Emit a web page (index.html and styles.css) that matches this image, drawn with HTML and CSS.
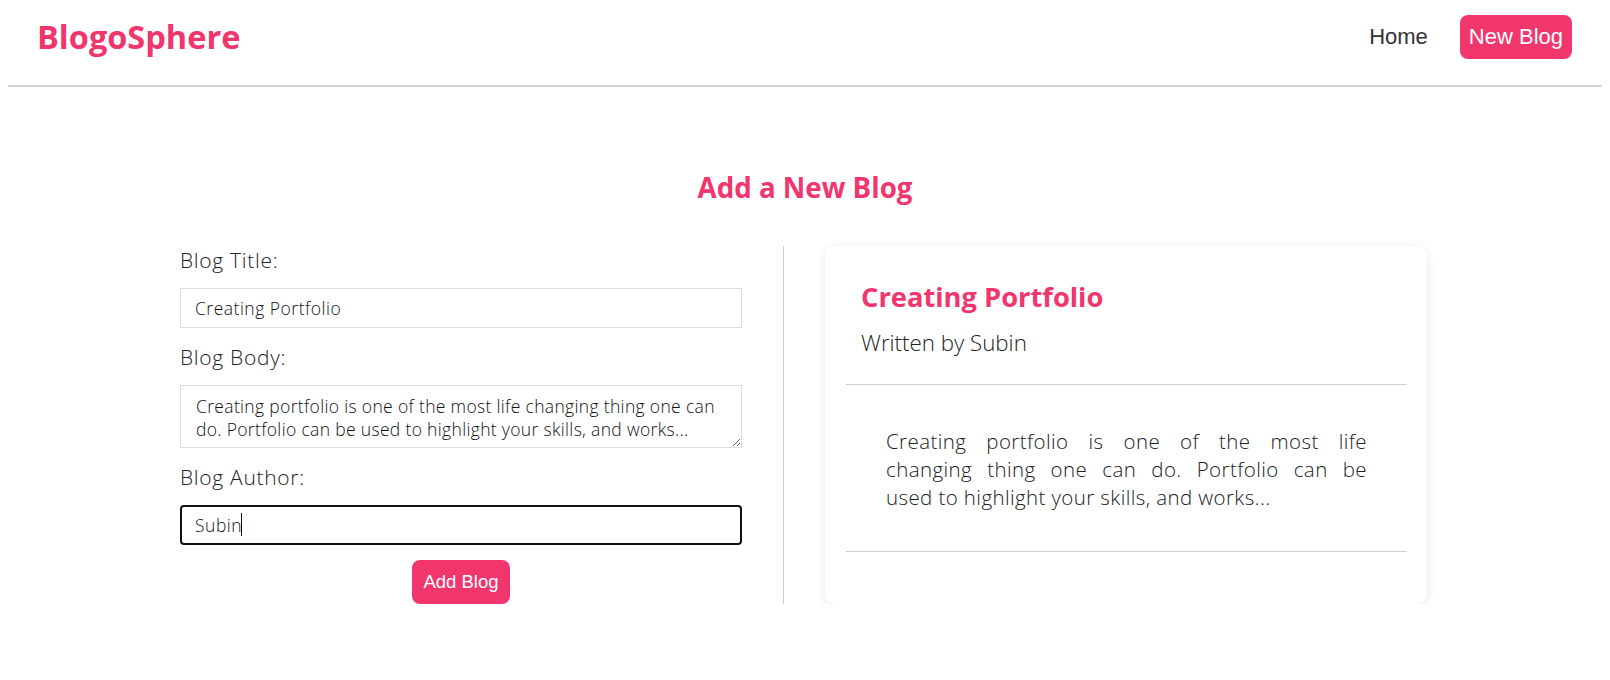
FILE: index.html
```html
<!DOCTYPE html>
<html lang="en">
<head>
<meta charset="utf-8">
<title>BlogoSphere</title>
<link rel="stylesheet" href="styles.css">
</head>
<body>
  <nav class="navbar">
    <h1 class="logo">BlogoSphere</h1>
    <div class="links">
      <a class="link" href="#">Home</a>
      <a class="link link-primary" href="#">New Blog</a>
    </div>
  </nav>
  <main class="create">
    <h2 class="page-title">Add a New Blog</h2>
    <div class="editor">
      <form class="form">
        <label class="label">Blog Title:</label>
        <input class="field" type="text" value="Creating Portfolio">
        <label class="label">Blog Body:</label>
        <textarea class="field field-area">Creating portfolio is one of the most life changing thing one can do. Portfolio can be used to highlight your skills, and works...</textarea>
        <label class="label">Blog Author:</label>
        <div class="field-wrap">
          <input class="field field-focus" type="text" value="Subin">
          <span class="caret"></span>
        </div>
        <button class="submit" type="button">Add Blog</button>
      </form>
      <div class="preview">
        <article class="card">
          <h2 class="card-title">Creating Portfolio</h2>
          <p class="card-author">Written by Subin</p>
          <hr class="rule">
          <p class="card-body"><span class="line">Creating portfolio is one of the most life</span> <span class="line">changing thing one can do. Portfolio can be</span> <span class="line-last">used to highlight your skills, and works...</span></p>
          <hr class="rule">
        </article>
      </div>
    </div>
  </main>
</body>
</html>
```

FILE: styles.css
```css
* {
  box-sizing: border-box;
}

body {
  margin: 8px;
  font-family: "Open Sans", "Liberation Sans", sans-serif;
  color: #333;
  background: #fff;
}

.navbar {
  display: flex;
  align-items: center;
  justify-content: space-between;
  padding: 7px 30px 26px 29px;
  border-bottom: 2px solid #d3d3d3;
}

.logo {
  margin: 0;
  font-size: 32.5px;
  font-weight: 700;
  color: #f1356d;
  line-height: 44px;
}

.links {
  display: flex;
  align-items: center;
  gap: 32px;
}

.link {
  font-family: "Liberation Sans", Arial, sans-serif;
  font-size: 22px;
  color: #333;
  text-decoration: none;
  line-height: 44px;
}

.link-primary {
  background: #f1356d;
  color: #fff;
  border-radius: 8px;
  padding: 0 9px;
}

.create {
  padding-top: 84px;
}

.page-title {
  margin: 0;
  text-align: center;
  font-size: 27.7px;
  line-height: 32px;
  font-weight: 700;
  color: #f1356d;
}

.editor {
  display: flex;
  justify-content: center;
  margin-top: 43px;
  padding-right: 3px;
}

.form {
  width: 604px;
  padding: 2px 41px 0 0;
  border-right: 1px solid #cfcfcf;
  display: flex;
  flex-direction: column;
  margin: 0;
}

.label {
  font-size: 21px;
  letter-spacing: 0.7px;
  font-weight: 300;
  line-height: 24px;
  color: #222;
  margin-bottom: 16px;
}

.field {
  width: 100%;
  height: 40px;
  margin: 0 0 17px;
  padding: 0 14px;
  border: 1px solid #ddd;
  border-radius: 0;
  font-family: "Open Sans", "Liberation Sans", sans-serif;
  font-size: 17.5px;
  letter-spacing: 0.5px;
  font-weight: 300;
  color: #111;
  background: #fff;
  outline: none;
}

.field-area {
  display: block;
  height: 63px;
  padding: 9px 20px 0 15px;
  font-size: 17.5px;
  letter-spacing: 0.33px;
  line-height: 22.5px;
  resize: vertical;
  overflow: hidden;
}

.field-wrap {
  position: relative;
}

.field-focus {
  margin: 0;
  border: 2px solid #111;
  border-radius: 4px;
  padding: 0 13px;
}

.caret {
  position: absolute;
  left: 61px;
  top: 8px;
  width: 1px;
  height: 23px;
  background: #111;
}

.submit {
  align-self: center;
  margin-top: 15px;
  height: 44px;
  padding: 0 11.5px;
  border: none;
  border-radius: 8px;
  background: #f1356d;
  color: #fff;
  font-family: "Liberation Sans", Arial, sans-serif;
  font-size: 18.5px;
  cursor: pointer;
}

.preview {
  padding-left: 41px;
  display: flex;
}

.card {
  width: 602px;
  padding: 35px 20px 52px 21px;
  border-radius: 10px;
  background: #fff;
  box-shadow: 0 2px 10px rgba(0, 0, 0, 0.1);
}

.card-title {
  margin: 0;
  padding-left: 15px;
  font-size: 27.3px;
  line-height: 32px;
  font-weight: 700;
  color: #f1356d;
}

.card-author {
  margin: 17px 0 0;
  padding-left: 15px;
  font-size: 22.3px;
  line-height: 26px;
  font-weight: 300;
  color: #222;
}

.rule {
  margin: 28px 0 0;
  border: none;
  border-top: 1px solid #d0d0d0;
}

.card-body {
  margin: 42px 0 40px;
  padding: 0 40px;
  font-size: 20.5px;
  letter-spacing: 0.4px;
  line-height: 28px;
  font-weight: 300;
  color: #222;
}

.line {
  display: block;
  text-align: justify;
  text-align-last: justify;
}

.line-last {
  display: block;
  text-align: left;
}

.card-body + .rule {
  margin-top: 0;
}
```
